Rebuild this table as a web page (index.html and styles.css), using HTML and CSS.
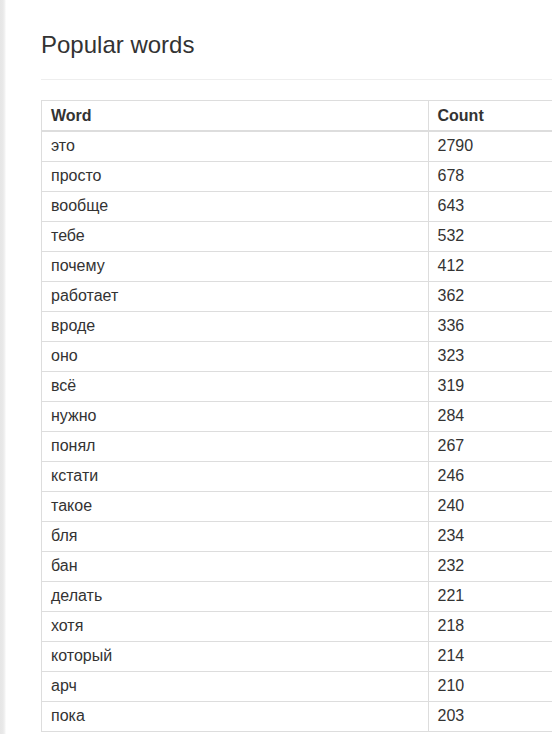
FILE: index.html
```html
<!DOCTYPE html>
<html lang="ru">
<head>
<meta charset="utf-8">
<title>Popular words</title>
<link rel="stylesheet" href="styles.css">
</head>
<body>
<div class="shell">
  <div class="edge"></div>
  <main class="content">
    <h1 class="title">Popular words</h1>
    <hr class="rule">
    <table class="words">
      <thead>
        <tr><th>Word</th><th>Count</th></tr>
      </thead>
      <tbody>
        <tr><td>это</td><td>2790</td></tr>
        <tr><td>просто</td><td>678</td></tr>
        <tr><td>вообще</td><td>643</td></tr>
        <tr><td>тебе</td><td>532</td></tr>
        <tr><td>почему</td><td>412</td></tr>
        <tr><td>работает</td><td>362</td></tr>
        <tr><td>вроде</td><td>336</td></tr>
        <tr><td>оно</td><td>323</td></tr>
        <tr><td>всё</td><td>319</td></tr>
        <tr><td>нужно</td><td>284</td></tr>
        <tr><td>понял</td><td>267</td></tr>
        <tr><td>кстати</td><td>246</td></tr>
        <tr><td>такое</td><td>240</td></tr>
        <tr><td>бля</td><td>234</td></tr>
        <tr><td>бан</td><td>232</td></tr>
        <tr><td>делать</td><td>221</td></tr>
        <tr><td>хотя</td><td>218</td></tr>
        <tr><td>который</td><td>214</td></tr>
        <tr><td>арч</td><td>210</td></tr>
        <tr><td>пока</td><td>203</td></tr>
      </tbody>
    </table>
  </main>
</div>
</body>
</html>
```
FILE: styles.css
```css
html, body {
  margin: 0;
  padding: 0;
  overflow: hidden;
  background: #fff;
}
body {
  font-family: "Liberation Sans", Arial, sans-serif;
  color: #333;
  font-size: 16px;
}
.shell {
  display: flex;
  min-height: 734px;
}
.edge {
  flex: 0 0 6px;
  background: linear-gradient(to right, #e6e6e6 0, #e9e9e9 3px, #f4f4f4 5px, #fff 6px);
}
.content {
  flex: 0 0 auto;
  width: 780px;
  padding: 32px 0 0 35px;
}
.title {
  margin: 0;
  font-size: 24px;
  line-height: 26px;
  font-weight: 400;
  color: #333;
}
.rule {
  margin: 21px 0 20px;
  border: 0;
  border-top: 1px solid #eee;
  height: 0;
}
.words {
  width: 774px;
  border-collapse: collapse;
  border: 1px solid #ddd;
}
.words th,
.words td {
  width: 50%;
  text-align: left;
  padding: 4px 9px 5px;
  line-height: 20px;
  border: 1px solid #ddd;
}
.words th {
  font-weight: 700;
  padding: 5px 9px 4px;
  border-bottom-width: 2px;
}
```
